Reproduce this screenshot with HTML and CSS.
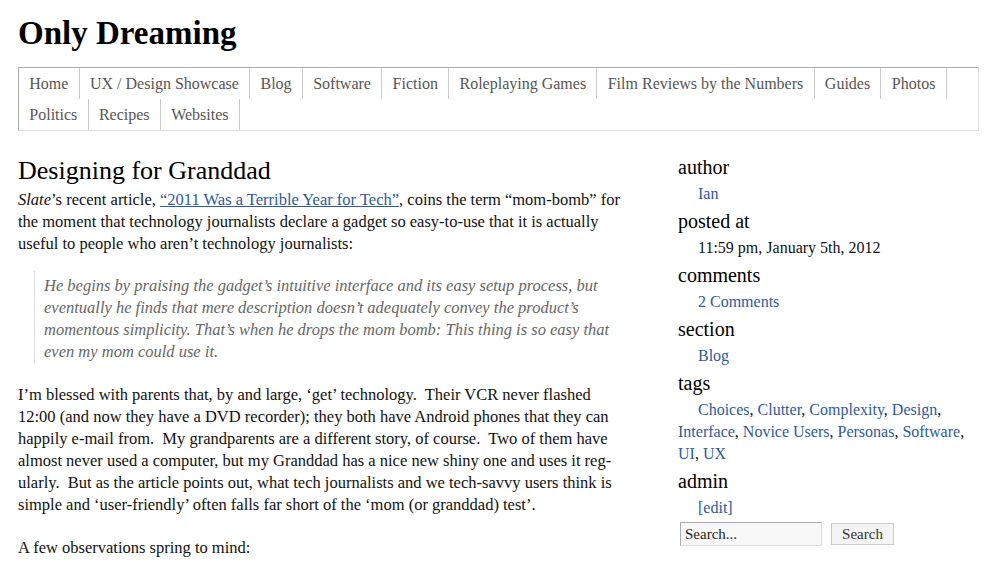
FILE: index.html
```html
<!DOCTYPE html>
<html lang="en">
<head>
<meta charset="utf-8">
<title>Designing for Granddad | Only Dreaming</title>
<link rel="stylesheet" href="styles.css">
</head>
<body>
<div class="page">
  <header class="site-header">
    <h1 class="site-title">Only Dreaming</h1>
    <nav class="site-nav">
      <ul class="nav-list">
        <li class="nav-item"><a href="#">Home</a></li>
        <li class="nav-item"><a href="#">UX / Design Showcase</a></li>
        <li class="nav-item"><a href="#">Blog</a></li>
        <li class="nav-item"><a href="#">Software</a></li>
        <li class="nav-item"><a href="#">Fiction</a></li>
        <li class="nav-item"><a href="#">Roleplaying Games</a></li>
        <li class="nav-item"><a href="#">Film Reviews by the Numbers</a></li>
        <li class="nav-item"><a href="#">Guides</a></li>
        <li class="nav-item"><a href="#">Photos</a></li>
        <li class="nav-item"><a href="#">Politics</a></li>
        <li class="nav-item"><a href="#">Recipes</a></li>
        <li class="nav-item"><a href="#">Websites</a></li>
      </ul>
    </nav>
  </header>
  <div class="main">
    <article class="post">
      <h2 class="post-title">Designing for Granddad</h2>
      <p><em>Slate</em>’s recent article, <a class="link" href="#">“2011 Was a Terrible Year for Tech”</a>, coins the term “mom-bomb” for the moment that technology journalists declare a gadget so easy-to-use that it is actually useful to people who aren’t technology journalists:</p>
      <blockquote class="quote">
        <p>He begins by praising the gadget’s intuitive interface and its easy setup process, but eventually he finds that mere description doesn’t adequately convey the product’s momentous simplicity. That’s when he drops the mom bomb: This thing is so easy that even my mom could use it.</p>
      </blockquote>
      <p>I’m blessed with parents that, by and large, ‘get’ technology.&nbsp; Their VCR never flashed 12:00 (and now they have a DVD recorder); they both have Android phones that they can happily e-mail from.&nbsp; My grandparents are a different story, of course.&nbsp; Two of them have almost never used a computer, but my Granddad has a nice new shiny one and uses it reg­ularly.&nbsp; But as the article points out, what tech journalists and we tech-savvy users think is simple and ‘user-friendly’ often falls far short of the ‘mom (or granddad) test’.</p>
      <p>A few observations spring to mind:</p>
    </article>
    <aside class="sidebar">
      <h3 class="side-head">author</h3>
      <p class="side-item"><a href="#">Ian</a></p>
      <h3 class="side-head">posted at</h3>
      <p class="side-item">11:59 pm, January 5th, 2012</p>
      <h3 class="side-head">comments</h3>
      <p class="side-item"><a href="#">2 Comments</a></p>
      <h3 class="side-head">section</h3>
      <p class="side-item"><a href="#">Blog</a></p>
      <h3 class="side-head">tags</h3>
      <p class="side-item"><a href="#">Choices</a>, <a href="#">Clutter</a>, <a href="#">Complexity</a>, <a href="#">Design</a>, <a href="#">Interface</a>, <a href="#">Novice Users</a>, <a href="#">Personas</a>, <a href="#">Software</a>, <a href="#">UI</a>, <a href="#">UX</a></p>
      <h3 class="side-head">admin</h3>
      <p class="side-item"><a href="#">[edit]</a></p>
      <form class="search">
        <input class="search-input" type="text" value="Search...">
        <button class="search-btn" type="button">Search</button>
      </form>
    </aside>
  </div>
</div>
</body>
</html>
```
FILE: styles.css
```css
* { box-sizing: border-box; }
html, body { margin: 0; padding: 0; background: #fff; }
body {
  font-family: "Liberation Serif", "DejaVu Serif", serif;
  color: #111;
  font-size: 16px;
}
.page { padding: 14px 12px 0 18px; }
.site-title {
  margin: 0;
  font-size: 33px;
  line-height: 38px;
  font-weight: bold;
  color: #000;
}
.site-nav { margin-top: 15px; }
.nav-list {
  list-style: none;
  margin: 0;
  padding: 0;
  display: flex;
  flex-wrap: wrap;
  border-top: 1px solid #aaa;
  border-left: 1px solid #aaa;
  border-right: 1px solid #ddd;
  border-bottom: 1px solid #ddd;
  height: 64px;
  align-content: flex-start;
}
.nav-item {
  height: 31px;
  border-right: 1px solid #ccc;
  display: flex;
  align-items: center;
  padding-top: 1px;
}
.nav-item a {
  color: #555;
  text-decoration: none;
  font-size: 16px;
  padding: 0 10.3px;
}
.main {
  display: flex;
  gap: 55px;
  margin-top: 25px;
}
.post { width: 605px; flex: none; }
.post-title {
  margin: 0 0 3px;
  font-size: 26px;
  font-weight: normal;
  line-height: 30px;
  color: #000;
}
.post p {
  margin: 0 0 21px;
  font-size: 16.5px;
  line-height: 22px;
}
.link { color: #2a5aa8; }
.quote {
  margin: -5px 0 21px 16px;
  padding: 4px 0 0 9px;
  border-left: 1px solid #ddd;
}
.quote p {
  font-style: italic;
  color: #666;
  margin: 0;
}
.sidebar { width: 301px; flex: none; margin-top: -2px; }
.side-head {
  margin: 0;
  font-size: 20px;
  font-weight: normal;
  line-height: 26px;
  color: #000;
}
.side-item {
  margin: 3px 0 3px;
  text-indent: 20px;
  font-size: 16px;
  line-height: 22px;
}
.side-item a { color: #2a5aa8; text-decoration: none; }
.search {
  display: flex;
  gap: 9px;
  margin: 3px 0 0 2px;
  align-items: center;
}
.search-input {
  width: 142px;
  height: 24px;
  border: 1px solid #aaa;
  border-right-color: #ddd;
  border-bottom-color: #ddd;
  background: #f8f8f8;
  font-family: inherit;
  font-size: 15px;
  padding: 0 4px;
  color: #222;
}
.search-btn {
  width: 63px;
  height: 22px;
  border: 1px solid #ccc;
  background: #f4f4f4;
  font-family: inherit;
  font-size: 15px;
  color: #333;
  padding: 0;
}
```
